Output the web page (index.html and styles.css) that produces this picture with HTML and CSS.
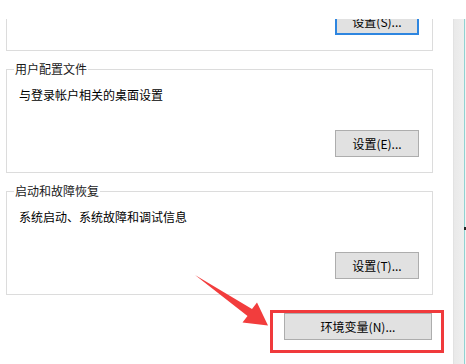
FILE: index.html
```html
<!DOCTYPE html>
<html lang="zh-CN">
<head>
<meta charset="utf-8">
<link rel="stylesheet" href="styles.css">
</head>
<body>
<div class="page">
  <div class="main">
    <div class="viewport">
      <div class="content">
        <div class="group group-cut">
          <div class="btn-row"><button class="btn btn-focus">设置(S)...</button></div>
        </div>
        <div class="group">
          <div class="group-title">用户配置文件</div>
          <div class="group-desc">与登录帐户相关的桌面设置</div>
          <div class="btn-row"><button class="btn">设置(E)...</button></div>
        </div>
        <div class="group">
          <div class="group-title">启动和故障恢复</div>
          <div class="group-desc">系统启动、系统故障和调试信息</div>
          <div class="btn-row"><button class="btn">设置(T)...</button></div>
        </div>
        <div class="footer">
          <div class="highlight"><button class="btn btn-wide">环境变量(N)...</button></div>
        </div>
      </div>
    </div>
  </div>
  <div class="strip"><div class="strip-mark"></div></div>
  <svg class="arrow" width="466" height="364" viewBox="0 0 466 364">
    <polygon points="195,275 252,309 257,302.5 268,325.5 242.5,322.5 247.5,316" fill="#f23d3d"/>
  </svg>
</div>
</body>
</html>
```

FILE: styles.css
```css
html, body {
  margin: 0;
  padding: 0;
  background: #fff;
}
body {
  font-family: "Noto Sans CJK SC", "Noto Sans", sans-serif;
  font-size: 12px;
  color: #000;
}
.page {
  position: relative;
  width: 466px;
  height: 364px;
  display: flex;
  overflow: hidden;
  background: #fff;
}
.main {
  width: 453px;
  display: flex;
  flex-direction: column;
}
.viewport {
  margin-top: 19px;
  height: 345px;
  overflow: hidden;
}
.content {
  margin-top: -11px;
}
.group {
  margin: 18px 20px 0 6px;
  border: 1px solid #dcdcdc;
  padding: 0 13px 15px 0;
}
.group-cut {
  margin-top: 0;
  border-top: 0;
}
.group-title {
  width: max-content;
  margin: -9px 0 0 7px;
  padding: 0 1px;
  line-height: 16px;
  background: #fff;
  color: #1a1a1a;
}
.group-desc {
  margin: 10px 0 0 12px;
  line-height: 16px;
}
.btn-row {
  display: flex;
  justify-content: flex-end;
  margin-top: 27px;
}
.group-cut .btn-row {
  margin-top: 0;
}
.btn {
  width: 84px;
  height: 27px;
  padding: 0;
  margin: 0;
  box-sizing: border-box;
  border: 1px solid #adadad;
  background: #e1e1e1;
  font-family: "Noto Sans CJK SC", "Noto Sans", sans-serif;
  font-size: 12px;
  color: #000;
  line-height: 25px;
  text-align: center;
}
.btn-focus {
  border-color: #2e86e0;
  box-shadow: inset 0 0 0 1px #2e86e0;
}
.btn-wide {
  width: 148px;
}
.footer {
  display: flex;
  justify-content: flex-end;
  padding-right: 9px;
  margin-top: 15px;
}
.highlight {
  border: 3px solid #f03a3c;
  padding: 0 9px 10px 11px;
}
.strip {
  width: 13px;
  margin-top: 19px;
  background: linear-gradient(to right, #e9e9e9 0, #efefef 10px, #8fd3d2 10px, #8fd3d2 11px, #f2f2f2 11px);
  border-left: 1px solid #e2e2e2;
  box-sizing: border-box;
}
.strip-mark {
  margin: 208px 0 0 10px;
  width: 2px;
  height: 3px;
  background: #222;
}
.arrow {
  position: absolute;
  left: 0;
  top: 0;
  pointer-events: none;
}
```
